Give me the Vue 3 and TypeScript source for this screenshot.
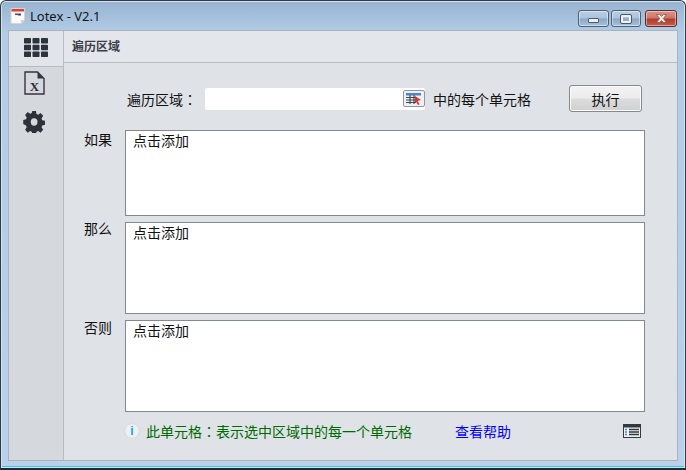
<script setup lang="ts">
const rows = [
  { label: '如果', cls: 'short' },
  { label: '那么', cls: 'tall lift3' },
  { label: '否则', cls: 'tall lift2' },
]
</script>

<template>
  <div class="win">
    <div class="titlebar">
      <svg class="appicon" width="16" height="18" viewBox="0 0 16 18">
        <path d="M1 1.5h13.5v11.5l-3.5 3.5H1z" fill="#fbfaf6" stroke="#d8d4cc" stroke-width="1" />
        <rect x="1.5" y="2" width="12.5" height="2.5" fill="#d8413a" />
        <rect x="5" y="6.5" width="3" height="1.5" fill="#c22" />
        <rect x="8" y="6.5" width="3" height="2" fill="#24479a" />
        <path d="M11 16.5v-3.5h3.5z" fill="#d5d2ca" />
      </svg>
      <span class="title">Lotex - V2.1</span>
      <div class="caption">
        <div class="capbtn"><span class="minglyph"></span></div>
        <div class="capbtn narrow"><span class="maxglyph"></span></div>
        <div class="capbtn close">
          <svg width="17" height="11" viewBox="0 0 17 11"><path d="M3.5 1.500h3l2 2 2-2h3l-3.300 4 3.300 4h-3l-2-2-2 2h-3l3.300-4z" fill="#f4f1f0" stroke="#7d4a45" stroke-width=".7" /></svg>
        </div>
      </div>
    </div>
    <div class="client">
      <aside class="side">
        <div class="side-top">
          <svg width="24" height="19" viewBox="0 0 24 19" fill="#2e343d">
            <rect x="0" y="0" width="7" height="5.500" rx=".7" /><rect x="8.500" y="0" width="7" height="5.500" rx=".7" /><rect x="17" y="0" width="7" height="5.500" rx=".7" />
            <rect x="0" y="6.800" width="7" height="5.500" rx=".7" /><rect x="8.500" y="6.800" width="7" height="5.500" rx=".7" /><rect x="17" y="6.800" width="7" height="5.500" rx=".7" />
            <rect x="0" y="13.500" width="7" height="5.500" rx=".7" /><rect x="8.500" y="13.500" width="7" height="5.500" rx=".7" /><rect x="17" y="13.500" width="7" height="5.500" rx=".7" />
          </svg>
        </div>
        <svg class="fileicon" width="21" height="24" viewBox="0 0 21 24">
          <path d="M1 1h12.500L20 7.500V23H1z" fill="none" stroke="#3a3340" stroke-width="1.400" />
          <path d="M13.500 1v6.500H20z" fill="#3a3340" />
          <text x="10.500" y="19.500" class="xglyph" text-anchor="middle">X</text>
        </svg>
        <svg class="gear" width="22" height="22" viewBox="0 0 24 24">
          <path fill="#2e3138" fill-rule="evenodd" d="M9.800 0h4.400l.6 3.300 2 .8 2.800-1.900 3.100 3.100-1.900 2.800.8 2 3.300.6v4.400l-3.300.6-.8 2 1.900 2.800-3.100 3.100-2.800-1.900-2 .8-.6 3.300H9.800l-.6-3.300-2-.8-2.800 1.900-3.100-3.100 1.900-2.800-.8-2L-.9 14.100V9.700l3.300-.6.8-2-1.900-2.800 3.100-3.100 2.800 1.900 2-.8zM12 8a4 4 0 100 8 4 4 0 000-8z" transform="translate(1.100 0) scale(.92 1)" />
        </svg>
      </aside>
      <main class="main">
        <header class="head">遍历区域</header>
        <div class="body">
          <div class="range">
            <span class="range-label">遍历区域<span class="tc">：</span></span>
            <div class="range-input">
              <svg class="picker" width="22" height="17" viewBox="0 0 22 17">
                <rect x=".5" y=".5" width="21" height="16" rx="1.500" fill="#eef0f3" stroke="#8f97a3" />
                <rect x="3" y="3" width="15" height="2.500" fill="#4c86c6" />
                <path d="M3 7.500h10M3 10h10M3 12.500h10M7 5v9M11 5v9" stroke="#3c4450" stroke-width="1.100" />
                <path d="M12 6l6 4-3.500 1 2.200 3.200-1.700 .8-2-3.200-1 1.200z" fill="#d8342a" />
              </svg>
            </div>
            <span class="range-text">中的每个单元格</span>
            <button class="run">执行</button>
          </div>
          <div v-for="r in rows" :key="r.label" class="cond" :class="r.cls">
            <span class="cond-label">{{ r.label }}</span>
            <div class="box">点击添加</div>
          </div>
          <div class="foot">
            <span class="info">i</span>
            <span class="note">此单元格<span class="tc">：</span>表示选中区域中的每一个单元格</span>
            <span class="help">查看帮助</span>
            <svg class="list" width="18" height="14" viewBox="0 0 18 14">
              <rect x=".5" y=".5" width="17" height="13" fill="#eef0f2" stroke="#33373e" />
              <rect x="0" y="0" width="18" height="3.500" fill="#33373e" />
              <path d="M6 5.500h10M6 8h10M6 10.500h10" stroke="#33373e" stroke-width="1.400" />
              <path d="M2 5.500h2M2 8h2M2 10.500h2" stroke="#4d8cc8" stroke-width="1.400" />
            </svg>
          </div>
        </div>
      </main>
    </div>
  </div>
</template>

<style scoped>
.win {
  width: 686px;
  height: 470px;
  box-sizing: border-box;
  border: 1px solid #2f3a42;
  border-radius: 6px 6px 0 0;
  border-bottom: 2px solid #1e2a30;
  background: linear-gradient(180deg, #97b3d0 0%, #b3cde6 7%, #b9d1ea 100%);
  box-shadow: inset 0 0 0 1px #d4e3f1, inset 0 -1px 0 1px #37c6e0;
  padding: 0 7px 7px 7px;
  display: flex;
  flex-direction: column;
  font-family: "Noto Sans CJK SC", "Noto Sans", sans-serif;
  color: #111;
  overflow: hidden;
}
.titlebar {
  height: 29px;
  flex: none;
  display: flex;
  align-items: center;
  position: relative;
}
.appicon {
  margin: 0 4px 0 2px;
}
.title {
  font-family: "Noto Sans", sans-serif;
  font-size: 13px;
  color: #10151a;
}
.caption {
  margin-left: auto;
  margin-right: 1px;
  align-self: flex-start;
  margin-top: 9px;
  display: flex;
  gap: 2px;
}
.capbtn {
  width: 29px;
  height: 15px;
  border: 1px solid #4c5f74;
  border-radius: 3px;
  background: linear-gradient(180deg, #bccfe2 0%, #aac2da 48%, #8aa7c4 52%, #a6c1db 100%);
  box-shadow: inset 0 0 0 1px rgba(255, 255, 255, .45);
  display: flex;
  align-items: center;
  justify-content: center;
}
.narrow {
  width: 28px;
}
.close {
  width: 30px;
  margin-left: 2px;
  border-color: #5c2a2a;
  background: linear-gradient(180deg, #dc9388 0%, #cc7668 48%, #b23a2a 52%, #c65a48 100%);
}
.minglyph {
  width: 9px;
  height: 3px;
  margin-top: 3px;
  background: #eef1f5;
  border: 1px solid #49586a;
  border-radius: 1px;
}
.maxglyph {
  width: 6px;
  height: 4px;
  border: 2px solid #eef1f5;
  outline: 1px solid #49586a;
  border-radius: 1px;
}
.client {
  flex: 1;
  display: flex;
  border: 1px solid #a9b3bd;
  background: #dfe2e7;
  min-height: 0;
}
.side {
  width: 55px;
  flex: none;
  box-sizing: border-box;
  background: #d5d8dc;
  border-right: 1px solid #b8bcc2;
  display: flex;
  flex-direction: column;
  align-items: center;
}
.side-top {
  align-self: stretch;
  height: 36px;
  box-sizing: border-box;
  background: #e1e4e9;
  border-bottom: 1px solid #b8bcc2;
  display: flex;
  align-items: center;
  justify-content: center;
  padding-bottom: 3px;
}
.fileicon {
  margin: 4px 4px 0 0;
}
.xglyph {
  font-family: "Liberation Serif", serif;
  font-size: 13px;
  font-weight: 700;
  fill: #2e2e33;
}
.gear {
  margin: 16px 4px 0 0;
}
.main {
  flex: 1;
  min-width: 0;
  display: flex;
  flex-direction: column;
}
.head {
  height: 32px;
  flex: none;
  box-sizing: border-box;
  background: #e3e6eb;
  border-bottom: 1px solid #b8bcc2;
  padding-left: 8px;
  line-height: 30px;
  font-size: 12px;
  font-weight: 700;
  color: #3e3e48;
}
.body {
  flex: 1;
  padding: 22px 32px 0 20px;
  font-size: 14px;
}
.tc {
  font-family: "Noto Sans CJK TC", sans-serif;
}
.range {
  display: flex;
  align-items: center;
  height: 27px;
  padding-left: 43px;
  margin-bottom: 18px;
}
.range-label {
  width: 78px;
  flex: none;
}
.range-input {
  width: 220px;
  height: 22px;
  flex: none;
  box-sizing: border-box;
  background: #fff;
  border-radius: 2px;
  display: flex;
  align-items: center;
  justify-content: flex-end;
}
.range-text {
  margin-left: 8px;
}
.run {
  margin-left: auto;
  margin-right: 3px;
  width: 73px;
  height: 27px;
  border: 1px solid #85898f;
  border-radius: 3px;
  background: linear-gradient(180deg, #f3f3f3 0%, #ececec 48%, #dcdcdc 52%, #d0d0d0 100%);
  box-shadow: inset 0 0 0 1px #fbfbfb;
  font-family: inherit;
  font-size: 14px;
  color: #111;
  padding: 0;
}
.cond {
  display: flex;
  margin-bottom: 6px;
}
.cond-label {
  width: 41px;
  flex: none;
  line-height: 18px;
}
.lift3 .cond-label {
  margin-top: -3px;
}
.lift2 .cond-label {
  margin-top: -2px;
}
.box {
  flex: 1;
  box-sizing: border-box;
  border: 1px solid #84888f;
  background: #fff;
  padding: 0 7px;
  line-height: 18px;
}
.short .box {
  height: 86px;
}
.tall .box {
  height: 92px;
}
.foot {
  display: flex;
  align-items: center;
  height: 20px;
  margin-top: 9px;
  padding-left: 41px;
}
.info {
  width: 14px;
  height: 14px;
  flex: none;
  border-radius: 50%;
  background: #eef1f4;
  color: #1aa0dc;
  font-family: "Liberation Sans", sans-serif;
  font-size: 12px;
  font-weight: 700;
  line-height: 14px;
  text-align: center;
  box-shadow: 0 0 1px #b9bcc2;
  margin-right: 7px;
}
.note {
  color: #006a00;
  width: 309px;
  flex: none;
}
.help {
  color: #0000ff;
}
.list {
  margin-left: auto;
  margin-right: 4px;
}
</style>
